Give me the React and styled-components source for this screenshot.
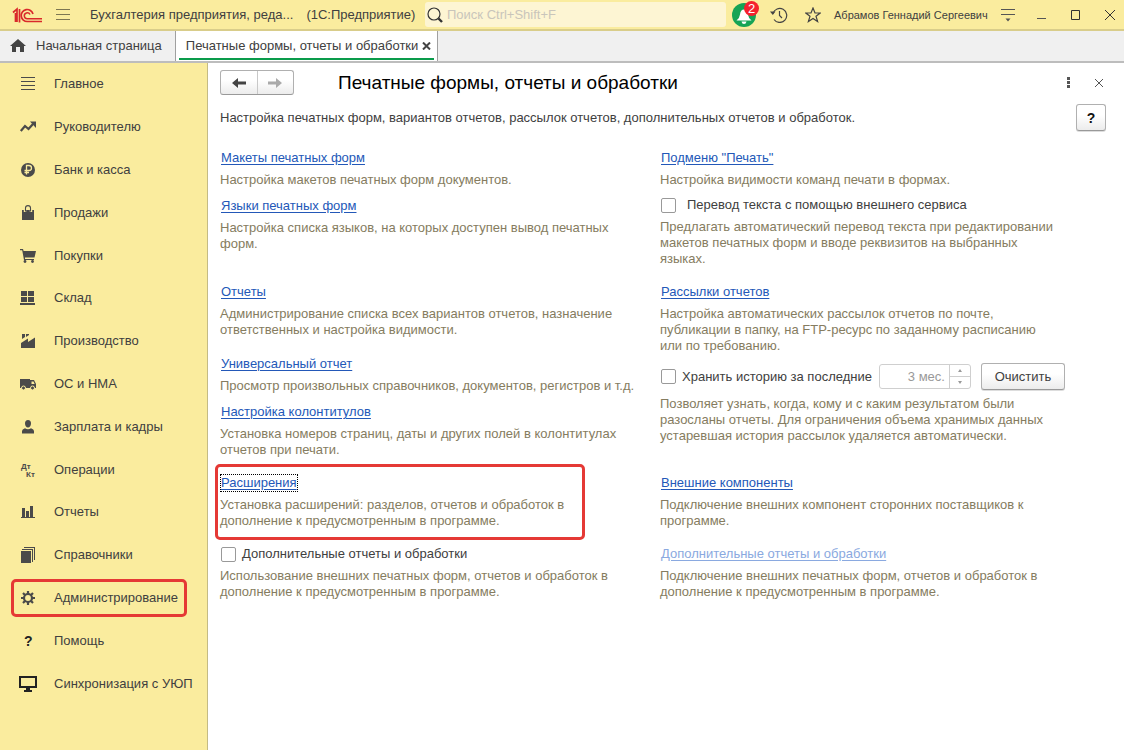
import React, { useState } from 'react';
import styled, { createGlobalStyle, css } from 'styled-components';

const GlobalStyle = createGlobalStyle`
  *, *::before, *::after {
    box-sizing: border-box;
  }
  body {
    margin: 0;
    background: #fff;
    color: #404040;
    font: 13px/16px "Liberation Sans", Arial, sans-serif;
  }
  button, input {
    font: inherit;
    color: inherit;
  }
  svg {
    display: block;
  }
`;

const Page = styled.div`
  display: flex;
  flex-direction: column;
  min-height: 100vh;
`;

const TopBar = styled.header`
  display: flex;
  align-items: center;
  height: 31px;
  padding-left: 12px;
  background: #faec9e;
  border-bottom: 2px solid #d9cd8a;
`;
const IconButton = styled.button`
  position: relative;
  display: flex;
  flex: none;
  align-items: center;
  justify-content: center;
  width: ${(props) => props.$width || 34}px;
  height: 28px;
  padding: 0;
  border: 0;
  background: none;
`;
const AppTitle = styled.div`
  display: flex;
  flex: none;
  gap: 13px;
  width: 343px;
  padding-left: 8px;
  white-space: nowrap;
`;
const Search = styled.label`
  display: flex;
  flex: 1;
  align-items: center;
  gap: 4px;
  height: 25px;
  min-width: 0;
  padding-left: 2px;
  border-radius: 3px;
  background: #fdf5d3;
`;
const SearchInput = styled.input`
  flex: 1;
  min-width: 0;
  padding: 0;
  border: 0;
  outline: 0;
  background: none;
  &::placeholder {
    color: #c9c5bb;
    opacity: 1;
  }
`;
const Badge = styled.span`
  position: absolute;
  top: 0;
  right: 3px;
  width: 15px;
  height: 15px;
  border-radius: 50%;
  background: #f5222d;
  color: #fff;
  font-size: 13px;
  line-height: 15px;
  text-align: center;
`;
const UserName = styled.div`
  flex: none;
  width: 158px;
  padding-left: 4px;
  font-size: 11px;
  white-space: nowrap;
`;

const TabBar = styled.nav`
  display: flex;
  height: 32px;
  background: #f0f0f0;
  border-bottom: 2px solid #bdbdbd;
`;
const Tab = styled.div`
  position: relative;
  display: flex;
  align-items: center;
  gap: ${(props) => (props.$active ? 4 : 10)}px;
  padding: 0 ${(props) => (props.$active ? 6 : 13)}px 0 10px;
  border-right: 1px solid #a0a0a0;
  background: ${(props) => (props.$active ? '#fff' : 'none')};
  white-space: nowrap;
  ${(props) => props.$active && css`
    &::after {
      content: '';
      position: absolute;
      right: 3px;
      bottom: 1px;
      left: 3px;
      height: 2px;
      background: #0a9b4b;
    }
  `}
`;
const TabLink = styled.a`
  color: inherit;
  text-decoration: none;
`;
const TabClose = styled.button`
  padding: 0;
  border: 0;
  background: none;
`;

const Body = styled.div`
  display: flex;
  flex: 1;
`;
const Sidebar = styled.nav`
  display: flex;
  flex: none;
  flex-direction: column;
  width: 208px;
  padding-bottom: 45px;
  background: #faec9e;
  border-right: 1px solid #c4bb84;
`;
const SideItem = styled.a`
  display: flex;
  flex: 1;
  align-items: center;
  align-self: flex-start;
  gap: 18px;
  min-height: 28px;
  margin: 2px 0 2px 11px;
  padding: 0 6px;
  border: 3px solid ${(props) => (props.$marked ? '#e53935' : 'transparent')};
  border-radius: 5px;
  color: inherit;
  text-decoration: none;
  white-space: nowrap;
`;
const SideIcon = styled.svg`
  flex: none;
  width: 16px;
  height: 16px;
  overflow: visible;
  fill: #4a4a4a;
`;

const Main = styled.main`
  flex: 1;
  min-width: 0;
  padding: 7px 10px 20px 12px;
`;
const FormHeader = styled.div`
  display: flex;
  align-items: center;
  height: 25px;
`;
const History = styled.div`
  display: flex;
  width: 74px;
  height: 25px;
  border: 1px solid #b0b0b0;
  border-bottom-color: #999;
  border-radius: 3px;
  background: linear-gradient(#fff 40%, #ececec);
`;
const HistoryButton = styled.button`
  display: flex;
  flex: 1;
  align-items: center;
  justify-content: center;
  padding: 0;
  border: 0;
  background: none;
  color: ${(props) => (props.disabled ? '#aaa' : '#444')};
  & + & {
    border-left: 1px solid #c8c8c8;
  }
`;
const Title = styled.h1`
  flex: 1;
  margin: 0 0 0 44px;
  color: #000;
  font-size: 19px;
  line-height: 24px;
  font-weight: 400;
`;
const Intro = styled.div`
  display: flex;
  justify-content: space-between;
  margin-top: 9px;
  padding-right: 8px;
`;
const IntroText = styled.p`
  margin: 6px 0 0;
`;
const PushButton = styled.button`
  width: ${(props) => props.$width}px;
  height: 27px;
  padding: 0;
  border: 1px solid #b0b0b0;
  border-bottom-color: #999;
  border-radius: 3px;
  background: linear-gradient(#fff 40%, #ececec);
  box-shadow: 0 1px 0 #ddd;
  ${(props) => props.$bold && css`
    color: #111;
    font-size: 14px;
    font-weight: 700;
  `}
`;

const Settings = styled.div`
  display: grid;
  grid-template-columns: 440px minmax(400px, 1fr);
  row-gap: 17px;
  margin-top: 19px;
`;
const Cell = styled.section`
  display: flex;
  flex-direction: column;
  gap: ${(props) => (props.$tight ? 9 : 10)}px;
`;
const Item = styled.div`
  position: relative;
  margin-bottom: ${(props) => (props.$spaced ? 8 : 0)}px;
  ${(props) => props.$marked && css`
    &::before {
      content: '';
      position: absolute;
      top: -11px;
      bottom: -11px;
      left: -5px;
      width: 370px;
      border: 3px solid #e53935;
      border-radius: 5px;
      pointer-events: none;
    }
  `}
`;
const ItemHead = styled.div`
  display: flex;
  align-items: center;
  min-height: 16px;
`;
const ItemLink = styled.a`
  margin-left: 1px;
  color: ${(props) => (props.$dim ? '#8aa9e0' : '#2358b8')};
  text-underline-offset: 2px;
  ${(props) => props.$focused && css`
    outline: 1px dotted #000;
    outline-offset: 0;
  `}
`;
const Hint = styled.p`
  margin: 6px 0 0;
  color: #857c60;
  white-space: pre-line;
`;
const CheckLabel = styled.label`
  display: flex;
  align-items: center;
  gap: ${(props) => props.$gap || 6}px;
  margin-left: 1px;
`;
const Check = styled.input`
  appearance: none;
  flex: none;
  width: 15px;
  height: 15px;
  margin: 0;
  border: 1px solid #999;
  border-radius: 2px;
  background: #fff;
  &:checked {
    background: #0a9b4b;
  }
`;
const Spinner = styled.div`
  display: flex;
  width: 92px;
  height: 25px;
  margin: 0 10px 0 7px;
  border: 1px solid #cfcfcf;
  border-radius: 3px;
`;
const SpinnerInput = styled.input`
  flex: 1;
  min-width: 0;
  padding: 0 4px 0 0;
  border: 0;
  background: none;
  color: #999;
  text-align: right;
`;
const SpinnerSteps = styled.div`
  display: flex;
  flex-direction: column;
  width: 21px;
  border-left: 1px solid #cfcfcf;
`;
const Step = styled.button`
  display: flex;
  flex: 1;
  align-items: center;
  justify-content: center;
  padding: 0;
  border: 0;
  background: none;
  & + & {
    border-top: 1px solid #cfcfcf;
  }
`;

const sections = [
  { label: 'Главное', icon: <path d="M1 1h14v1H1zM1 5h14v1H1zM1 9h14v1H1zM1 13h14v1H1z" /> },
  {
    label: 'Руководителю',
    icon: (
      <>
        <path d="M.8 12 5 7l3.500 3L13 5" fill="none" stroke="#4a4a4a" strokeWidth="2.200" />
        <path d="M10 2.500h6V9z" />
      </>
    ),
  },
  {
    label: 'Банк и касса',
    icon: (
      <>
        <circle cx="8" cy="8" r="7" />
        <path d="M6.500 12.500v-9h2.500a2.300 2.300 0 0 1 0 5H4.500M4.500 10.500h4.500" fill="none" stroke="#faec9e" strokeWidth="1.300" />
      </>
    ),
  },
  {
    label: 'Продажи',
    icon: (
      <>
        <path d="M2 5h12v10H2z" />
        <path d="M5 7V3.500Q5 1 8 1t3 2.500V7" fill="none" stroke="#faec9e" strokeWidth="2.400" />
        <path d="M5.500 6.500V3Q5.500 .6 8 .6T10.500 3v3.500" fill="none" stroke="#4a4a4a" strokeWidth="1.100" />
      </>
    ),
  },
  {
    label: 'Покупки',
    icon: (
      <>
        <path d="M0 1h3l.6 2H16l-1.500 6.500H5V11h9v1H4L2.200 2.200H0z" />
        <circle cx="5" cy="13.500" r="1.400" />
        <circle cx="12.500" cy="13.500" r="1.400" />
      </>
    ),
  },
  { label: 'Склад', icon: <path d="M1 1h6v5H1zM8 1h6v5H8zM1 7h6v5H1zM8 7h6v5H8zM0 13h15v2H0z" /> },
  { label: 'Производство', icon: <path d="M1 15v-5l7-4.500V9l7-4.500V15zM2 1h3v3L2 6zM6 1h3v1L6 4z" /> },
  {
    label: 'ОС и НМА',
    icon: (
      <>
        <path d="M0 3h10v9H0zM10 4h4l2 4v4h-6z" />
        <path d="M11.500 5.500h2l1.200 2.500h-3.200z" fill="#faec9e" />
        <circle cx="3.500" cy="12" r="2" stroke="#faec9e" />
        <circle cx="12.500" cy="12" r="2" stroke="#faec9e" />
      </>
    ),
  },
  {
    label: 'Зарплата и кадры',
    icon: <path d="M8 1c2 0 3 1.400 3 3.200 0 2.300-1.200 4.300-3 4.300S5 6.500 5 4.200C5 2.400 6 1 8 1zM2 14.500V12q0-1.800 3-2.800 3 2 6 0 3 1 3 2.800v2.500z" />,
  },
  {
    label: 'Операции',
    icon: (
      <>
        <text x="1" y="7" fontSize="8" fontWeight="700">Дт</text>
        <text x="6" y="15" fontSize="8" fontWeight="700">Кт</text>
      </>
    ),
  },
  { label: 'Отчеты', icon: <path d="M2 4h3v9h1V7h3v6h1V2h3v11h2v1H1v-1h1z" /> },
  {
    label: 'Справочники',
    icon: <path d="M1 4h10v12H1zM2 2h11v13h-1V3H2zM4 0h11v13h-1V1H4z" />,
  },
  {
    label: 'Администрирование',
    marked: true,
    icon: (
      <>
        <circle cx="8" cy="8" r="4" fill="none" stroke="#4a4a4a" strokeWidth="2.200" />
        <path
          d="M8 1v3M8 12v3M1 8h3M12 8h3M3 3l2.200 2.200M10.800 10.800L13 13M3 13l2.200-2.200M10.800 5.200L13 3"
          stroke="#4a4a4a"
          strokeWidth="2.200"
        />
      </>
    ),
  },
  { label: 'Помощь', icon: <text x="4" y="13" fontSize="14" fontWeight="700" fill="#222">?</text> },
  {
    label: 'Синхронизация с УЮП',
    icon: <path d="M-1 0h18v12H-1zM1 2v8h14V2zM6 12h4v2h2v2H4v-2h2z" fill="#222" fillRule="evenodd" />,
  },
];

const Setting = ({
  title, hint, dim, focused, marked, spaced,
}) => (
  <Item $marked={marked} $spaced={spaced}>
    <ItemHead>
      <ItemLink href="#" $dim={dim} $focused={focused}>{title}</ItemLink>
    </ItemHead>
    <Hint>{hint}</Hint>
  </Item>
);

const CheckSetting = ({
  title, hint, gap, children,
}) => {
  const [checked, setChecked] = useState(false);
  return (
    <Item>
      <ItemHead>
        <CheckLabel $gap={gap}>
          <Check type="checkbox" checked={checked} onChange={() => setChecked(!checked)} />
          {title}
        </CheckLabel>
        {children}
      </ItemHead>
      <Hint>{hint}</Hint>
    </Item>
  );
};

const Header = () => (
  <TopBar>
    <IconButton $width={32} aria-label="1С">
      <svg width="32" height="18" viewBox="0 0 32 18" fill="none" stroke="#d9292b">
        <path d="M1 6.500l4-3.500V16M3.500 7v9M7.500 3v13.500" strokeWidth="1.700" />
        <path d="M21 8A6 6 0 1 0 15.500 15.500H30" strokeWidth="1.700" />
        <path d="M18 8.500A3 3 0 1 0 15.500 12.800H30" strokeWidth="1.500" />
      </svg>
    </IconButton>
    <IconButton $width={38} aria-label="Меню">
      <svg width="14" height="13" stroke="#7d7752">
        <path d="M0 1.500h14M0 6.500h14M0 11.500h14" />
      </svg>
    </IconButton>
    <AppTitle>
      <span>Бухгалтерия предприятия, реда...</span>
      <span>(1С:Предприятие)</span>
    </AppTitle>
    <Search>
      <svg width="16" height="16" fill="none" stroke="#333">
        <circle cx="7" cy="7" r="6" strokeWidth="1.200" />
        <path d="M11.500 11.500l3.500 3.500" strokeWidth="2.400" />
      </svg>
      <SearchInput aria-label="Поиск" placeholder="Поиск Ctrl+Shift+F" />
    </Search>
    <IconButton $width={36} aria-label="Уведомления">
      <svg width="24" height="24">
        <circle cx="12" cy="12" r="12" fill="#16a455" />
        <path d="M4.500 17.500q3-2 3.500-6 .5-5 4-5t4 5q.5 4 3.500 6zM9.500 18.500h5q-.5 2.500-2.500 2.500t-2.500-2.500z" fill="#fff" />
      </svg>
      <Badge>2</Badge>
    </IconButton>
    <IconButton aria-label="История">
      <svg width="18" height="16" fill="none" stroke="#444" strokeWidth="1.200">
        <path d="M3 6.500a7 7 0 1 1 1 6M9.500 4v4.500l2.500 2.500" />
        <path d="M0 4.500h5.500L2.800 8z" fill="#444" stroke="none" />
      </svg>
    </IconButton>
    <IconButton aria-label="Избранное">
      <svg width="16" height="16" fill="none" stroke="#444" strokeWidth="1.200">
        <path d="M8 1l2 5h5.200l-4.200 3.300 1.600 5.200L8 11.400l-4.600 3.100L5 9.300.8 6H6z" />
      </svg>
    </IconButton>
    <UserName>Абрамов Геннадий Сергеевич</UserName>
    <IconButton $width={40} aria-label="Настройки">
      <svg width="14" height="14" fill="#555">
        <path d="M0 1h14v1H0zM0 6h14v1H0zM4.500 10.500h5L7 13.500z" />
      </svg>
    </IconButton>
    <IconButton $width={28} aria-label="Свернуть">
      <svg width="10" height="10" fill="#555">
        <path d="M0 8h9v1H0z" />
      </svg>
    </IconButton>
    <IconButton $width={40} aria-label="Развернуть">
      <svg width="10" height="10" fill="none" stroke="#333">
        <path d="M.5.5h8v9h-8z" />
      </svg>
    </IconButton>
    <IconButton $width={28} aria-label="Закрыть">
      <svg width="10" height="10" stroke="#333">
        <path d="M0 0l10 10M10 0L0 10" />
      </svg>
    </IconButton>
  </TopBar>
);

const Arrow = ({ back }) => (
  <svg width="14" height="10" fill="currentColor">
    <path d={back ? 'M0 5l6-5v3.500h8v3H6V10z' : 'M14 5L8 0v3.500H0v3h8V10z'} />
  </svg>
);

const App = () => {
  const [period, setPeriod] = useState('3 мес.');
  return (
    <Page>
      <GlobalStyle />
      <Header />
      <TabBar>
        <Tab>
          <svg width="16" height="14" fill="#444">
            <path d="M8 0l8 7h-2v6h-4V8H6v5H2V7H0z" />
          </svg>
          <TabLink href="#">Начальная страница</TabLink>
        </Tab>
        <Tab $active>
          <TabLink href="#">Печатные формы, отчеты и обработки</TabLink>
          <TabClose aria-label="Закрыть вкладку">
            <svg width="9" height="8" stroke="#444" strokeWidth="2">
              <path d="M1 .5l7 7M8 .5l-7 7" />
            </svg>
          </TabClose>
        </Tab>
      </TabBar>
      <Body>
        <Sidebar>
          {sections.map((section) => (
            <SideItem key={section.label} href="#" $marked={section.marked}>
              <SideIcon>{section.icon}</SideIcon>
              {section.label}
            </SideItem>
          ))}
        </Sidebar>
        <Main>
          <FormHeader>
            <History>
              <HistoryButton aria-label="Назад"><Arrow back /></HistoryButton>
              <HistoryButton aria-label="Вперед" disabled><Arrow /></HistoryButton>
            </History>
            <Title>Печатные формы, отчеты и обработки</Title>
            <IconButton $width={30} aria-label="Еще">
              <svg width="4" height="12" fill="#555">
                <path d="M0 0h3v3H0zM0 4h3v3H0zM0 8h3v3H0z" />
              </svg>
            </IconButton>
            <IconButton $width={30} aria-label="Закрыть форму">
              <svg width="8" height="8" stroke="#555">
                <path d="M0 0l8 8M8 0L0 8" />
              </svg>
            </IconButton>
          </FormHeader>
          <Intro>
            <IntroText>Настройка печатных форм, вариантов отчетов, рассылок отчетов, дополнительных отчетов и обработок.</IntroText>
            <PushButton $width={30} $bold>?</PushButton>
          </Intro>
          <Settings>
            <Cell>
              <Setting title="Макеты печатных форм" hint="Настройка макетов печатных форм документов." />
              <Setting title="Языки печатных форм" hint={'Настройка списка языков, на которых доступен вывод печатных\nформ.'} />
            </Cell>
            <Cell $tight>
              <Setting title={'Подменю "Печать"'} hint="Настройка видимости команд печати в формах." />
              <CheckSetting
                gap={11}
                title="Перевод текста с помощью внешнего сервиса"
                hint={'Предлагать автоматический перевод текста при редактировании\nмакетов печатных форм и вводе реквизитов на выбранных\nязыках.'}
              />
            </Cell>
            <Cell>
              <Setting spaced title="Отчеты" hint={'Администрирование списка всех вариантов отчетов, назначение\nответственных и настройка видимости.'} />
              <Setting title="Универсальный отчет" hint="Просмотр произвольных справочников, документов, регистров и т.д." />
              <Setting title="Настройка колонтитулов" hint={'Установка номеров страниц, даты и других полей в колонтитулах\nотчетов при печати.'} />
            </Cell>
            <Cell $tight>
              <Setting title="Рассылки отчетов" hint={'Настройка автоматических рассылок отчетов по почте,\nпубликации в папку, на FTP-ресурс по заданному расписанию\nили по требованию.'} />
              <CheckSetting
                title="Хранить историю за последние"
                hint={'Позволяет узнать, когда, кому и с каким результатом были\nразосланы отчеты. Для ограничения объема хранимых данных\nустаревшая история рассылок удаляется автоматически.'}
              >
                <Spinner>
                  <SpinnerInput aria-label="Срок хранения" value={period} onChange={(e) => setPeriod(e.target.value)} />
                  <SpinnerSteps>
                    <Step aria-label="Больше">
                      <svg width="4" height="3" fill="#999"><path d="M0 3l2-3 2 3z" /></svg>
                    </Step>
                    <Step aria-label="Меньше">
                      <svg width="4" height="3" fill="#999"><path d="M0 0l2 3 2-3z" /></svg>
                    </Step>
                  </SpinnerSteps>
                </Spinner>
                <PushButton $width={84}>Очистить</PushButton>
              </CheckSetting>
            </Cell>
            <Cell>
              <Setting marked focused title="Расширения" hint={'Установка расширений: разделов, отчетов и обработок в\nдополнение к предусмотренным в программе.'} />
            </Cell>
            <Cell>
              <Setting title="Внешние компоненты" hint={'Подключение внешних компонент сторонних поставщиков к\nпрограмме.'} />
            </Cell>
            <Cell>
              <CheckSetting title="Дополнительные отчеты и обработки" hint={'Использование внешних печатных форм, отчетов и обработок в\nдополнение к предусмотренным в программе.'} />
            </Cell>
            <Cell>
              <Setting dim title="Дополнительные отчеты и обработки" hint={'Подключение внешних печатных форм, отчетов и обработок в\nдополнение к предусмотренным в программе.'} />
            </Cell>
          </Settings>
        </Main>
      </Body>
    </Page>
  );
};

export default App;
